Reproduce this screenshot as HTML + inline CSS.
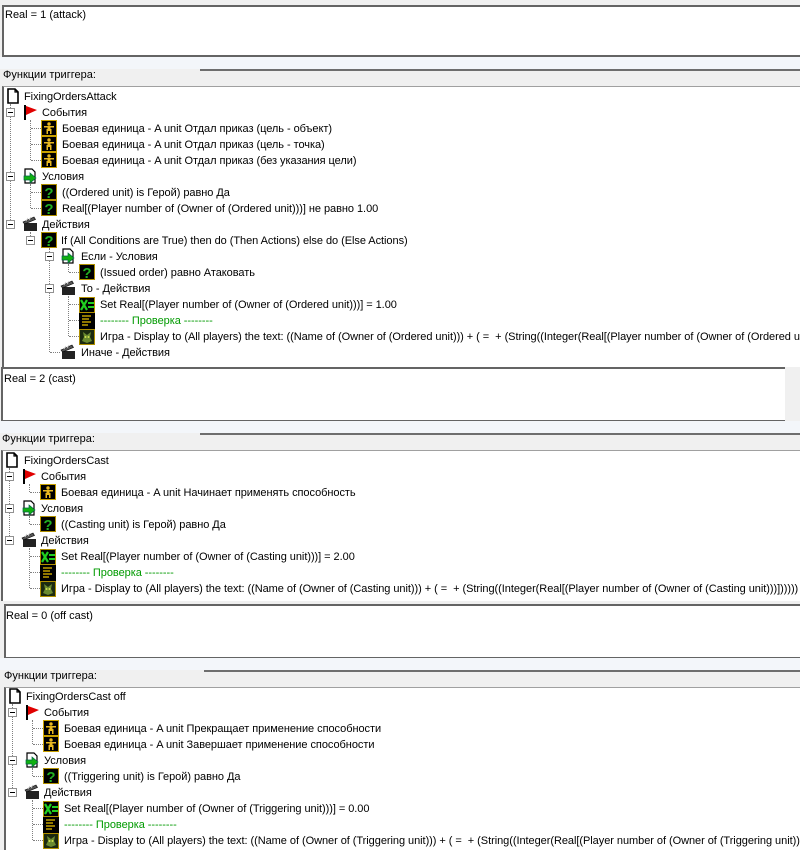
<!DOCTYPE html>
<html style="overflow:hidden"><head><meta charset="utf-8">
<style>
html,body{overflow:hidden}
body{margin:0;width:800px;height:850px;background:#f0f0f0;position:relative;overflow:hidden;font-family:"Liberation Sans",Arial,sans-serif;font-size:11px;color:#000}
.a{position:absolute;white-space:nowrap}
.t{position:absolute;white-space:nowrap;line-height:16px;height:16px;overflow:hidden;right:0;padding-top:1px;letter-spacing:-0.05px}
.tb{position:absolute;background:#fff;border-top:2px solid #646464;border-left:2px solid #646464;border-bottom:2px solid #646464}
.strip{position:absolute;background:#f3f6fa;height:12px}
.lbl{position:absolute;white-space:nowrap}
.hl{position:absolute;height:0;border-top:2px solid #6e6e6e}
.tree{position:absolute;background:#fff;border-top:1px solid #a0a0a0;border-left:2px solid #646464}
.ex{position:absolute;width:7px;height:7px;border:1px solid #919191;background:#fff}
.ex:after{content:"";position:absolute;left:1px;top:3px;width:5px;height:1px;background:#000}
.vd{position:absolute;width:0;border-left:1px dotted #808080}
.hd{position:absolute;height:0;border-top:1px dotted #808080}
svg.i{position:absolute;width:16px;height:16px}
.g{color:#009a00}
</style></head><body>
<svg width="0" height="0" style="position:absolute">
<defs>
<symbol id="doc" viewBox="0 0 16 16"><path d="M3 1h7l3 3v11H3z" fill="#fff" stroke="#000" stroke-width="1.6"/><path d="M10 1v3h3" fill="none" stroke="#000" stroke-width="1.2"/></symbol>
<symbol id="flag" viewBox="0 0 16 16"><rect x="2" y="1" width="2" height="15" fill="#000"/><path d="M4 2l11 4-11 5z" fill="#e00000"/></symbol>
<symbol id="unit" viewBox="0 0 16 16"><rect x="0" y="0" width="16" height="16" fill="#c8a000"/><rect x="1" y="1" width="14" height="14" fill="#000"/><circle cx="8" cy="4" r="1.7" fill="#e8b820"/><path d="M3 6h10v1.5H9.5V9h1v5H9v-3H7v3H5.5V9h1V7.5H3z" fill="#e8b820"/></symbol>
<symbol id="cond" viewBox="0 0 16 16"><path d="M3 1h7l3 3v11H3z" fill="#fff" stroke="#000" stroke-width="1.2"/><path d="M2 8h6V5l6 5-6 5v-3H2z" fill="#10b010" stroke="#064" stroke-width=".7"/></symbol>
<symbol id="q" viewBox="0 0 16 16"><rect width="16" height="16" fill="#b09000"/><rect x="1" y="1" width="14" height="14" fill="#000"/><text x="8" y="14" font-family="Liberation Sans" font-weight="bold" font-size="15" text-anchor="middle" fill="#22b022">?</text></symbol>
<symbol id="act" viewBox="0 0 16 16"><rect x="2" y="7" width="13" height="8" fill="#222"/><path d="M1 6l11-5 1.5 2.5L2.5 8z" fill="#555" stroke="#000" stroke-width=".6"/><path d="M4 5l2-3M7 4l2-3" stroke="#ccc" stroke-width=".8"/></symbol>
<symbol id="set" viewBox="0 0 16 16"><rect width="16" height="16" fill="#b09000"/><rect x="1" y="1" width="14" height="14" fill="#000"/><path d="M2 3l6 10M8 3L2 13" stroke="#20d020" stroke-width="2.2"/><path d="M9 6h6M9 10h6" stroke="#20d020" stroke-width="2"/></symbol>
<symbol id="cm" viewBox="0 0 16 16"><rect width="16" height="16" fill="#000"/><path d="M3 3h9M3 6h7M3 9h9M3 12h6" stroke="#e8c000" stroke-width="1.2"/></symbol>
<symbol id="game" viewBox="0 0 16 16"><rect width="16" height="16" fill="#b09000"/><rect x="1" y="1" width="14" height="14" fill="#1c2a10"/><path d="M4 3l4 3 4-3-1 5 2 4-5 2-5-2 2-4z" fill="#6a8a30"/><circle cx="6.5" cy="8" r="1" fill="#d0e050"/><circle cx="9.5" cy="8" r="1" fill="#d0e050"/></symbol>
</defs></svg>

<!-- ============ PANEL 1 ============ -->
<div class="tb" style="left:2px;top:5px;right:0;height:48px"></div>
<div class="a" style="left:5px;top:9px">Real = 1 (attack)</div>
<div class="strip" style="left:0;top:57px;right:0"></div>
<div class="hl" style="left:200px;top:69px;right:0"></div>
<div class="lbl" style="left:3px;top:69px">Функции триггера:</div>
<div class="tree" style="left:2px;top:86px;right:0;height:280px"></div>

<div class="vd" style="left:10px;top:104px;height:120px"></div>
<div class="vd" style="left:30px;top:120px;height:40px"></div><div class="hd" style="left:31px;top:128px;width:10px"></div><div class="hd" style="left:31px;top:144px;width:10px"></div><div class="hd" style="left:31px;top:160px;width:10px"></div>
<div class="vd" style="left:30px;top:184px;height:24px"></div><div class="hd" style="left:31px;top:192px;width:10px"></div><div class="hd" style="left:31px;top:208px;width:10px"></div>
<div class="vd" style="left:30px;top:232px;height:8px"></div>
<div class="vd" style="left:49px;top:248px;height:104px"></div><div class="hd" style="left:50px;top:352px;width:10px"></div>
<div class="vd" style="left:68px;top:264px;height:8px"></div><div class="hd" style="left:69px;top:272px;width:10px"></div>
<div class="vd" style="left:68px;top:296px;height:40px"></div><div class="hd" style="left:69px;top:304px;width:10px"></div><div class="hd" style="left:69px;top:320px;width:10px"></div><div class="hd" style="left:69px;top:336px;width:10px"></div>

<svg class="i" style="left:5px;top:88px"><use href="#doc"/></svg><div class="t" style="left:24px;top:88px">FixingOrdersAttack</div>
<div class="ex" style="left:6px;top:108px"></div><svg class="i" style="left:22px;top:104px"><use href="#flag"/></svg><div class="t" style="left:42px;top:104px">События</div>
<svg class="i" style="left:41px;top:120px"><use href="#unit"/></svg><div class="t" style="left:62px;top:120px">Боевая единица - A unit Отдал приказ (цель - объект)</div>
<svg class="i" style="left:41px;top:136px"><use href="#unit"/></svg><div class="t" style="left:62px;top:136px">Боевая единица - A unit Отдал приказ (цель - точка)</div>
<svg class="i" style="left:41px;top:152px"><use href="#unit"/></svg><div class="t" style="left:62px;top:152px">Боевая единица - A unit Отдал приказ (без указания цели)</div>
<div class="ex" style="left:6px;top:172px"></div><svg class="i" style="left:22px;top:168px"><use href="#cond"/></svg><div class="t" style="left:42px;top:168px">Условия</div>
<svg class="i" style="left:41px;top:184px"><use href="#q"/></svg><div class="t" style="left:62px;top:184px">((Ordered unit) is Герой) равно Да</div>
<svg class="i" style="left:41px;top:200px"><use href="#q"/></svg><div class="t" style="left:62px;top:200px">Real[(Player number of (Owner of (Ordered unit)))] не равно 1.00</div>
<div class="ex" style="left:6px;top:220px"></div><svg class="i" style="left:22px;top:216px"><use href="#act"/></svg><div class="t" style="left:42px;top:216px">Действия</div>
<div class="ex" style="left:26px;top:236px"></div><svg class="i" style="left:41px;top:232px"><use href="#q"/></svg><div class="t" style="left:61px;top:232px">If (All Conditions are True) then do (Then Actions) else do (Else Actions)</div>
<div class="ex" style="left:45px;top:252px"></div><svg class="i" style="left:60px;top:248px"><use href="#cond"/></svg><div class="t" style="left:81px;top:248px">Если - Условия</div>
<svg class="i" style="left:79px;top:264px"><use href="#q"/></svg><div class="t" style="left:100px;top:264px">(Issued order) равно Атаковать</div>
<div class="ex" style="left:45px;top:284px"></div><svg class="i" style="left:60px;top:280px"><use href="#act"/></svg><div class="t" style="left:81px;top:280px">То - Действия</div>
<svg class="i" style="left:79px;top:297px"><use href="#set"/></svg><div class="t" style="left:100px;top:296px">Set Real[(Player number of (Owner of (Ordered unit)))] = 1.00</div>
<svg class="i" style="left:79px;top:313px"><use href="#cm"/></svg><div class="t g" style="left:100px;top:312px">-------- Проверка --------</div>
<svg class="i" style="left:79px;top:329px"><use href="#game"/></svg><div class="t" style="left:100px;top:328px">Игра - Display to (All players) the text: ((Name of (Owner of (Ordered unit))) + ( =&nbsp; + (String((Integer(Real[(Player number of (Owner of (Ordered unit)))])))))</div>
<svg class="i" style="left:60px;top:344px"><use href="#act"/></svg><div class="t" style="left:81px;top:344px">Иначе - Действия</div>

<!-- ============ PANEL 2 ============ -->
<div class="tb" style="left:1px;top:367px;width:782px;height:51px"></div>
<div class="a" style="left:4px;top:373px">Real = 2 (cast)</div>
<div class="strip" style="left:0;top:421px;right:0"></div>
<div class="hl" style="left:200px;top:433px;right:0"></div>
<div class="lbl" style="left:2px;top:433px">Функции триггера:</div>
<div class="tree" style="left:1px;top:450px;right:0;height:150px"></div>

<div class="vd" style="left:9px;top:468px;height:72px"></div>
<div class="vd" style="left:29px;top:484px;height:8px"></div><div class="hd" style="left:30px;top:492px;width:10px"></div>
<div class="vd" style="left:29px;top:516px;height:8px"></div><div class="hd" style="left:30px;top:524px;width:10px"></div>
<div class="vd" style="left:29px;top:548px;height:40px"></div><div class="hd" style="left:30px;top:556px;width:10px"></div><div class="hd" style="left:30px;top:572px;width:10px"></div><div class="hd" style="left:30px;top:588px;width:10px"></div>

<svg class="i" style="left:4px;top:452px"><use href="#doc"/></svg><div class="t" style="left:24px;top:452px">FixingOrdersCast</div>
<div class="ex" style="left:5px;top:472px"></div><svg class="i" style="left:21px;top:468px"><use href="#flag"/></svg><div class="t" style="left:41px;top:468px">События</div>
<svg class="i" style="left:40px;top:484px"><use href="#unit"/></svg><div class="t" style="left:61px;top:484px">Боевая единица - A unit Начинает применять способность</div>
<div class="ex" style="left:5px;top:504px"></div><svg class="i" style="left:21px;top:500px"><use href="#cond"/></svg><div class="t" style="left:41px;top:500px">Условия</div>
<svg class="i" style="left:40px;top:516px"><use href="#q"/></svg><div class="t" style="left:61px;top:516px">((Casting unit) is Герой) равно Да</div>
<div class="ex" style="left:5px;top:536px"></div><svg class="i" style="left:21px;top:532px"><use href="#act"/></svg><div class="t" style="left:41px;top:532px">Действия</div>
<svg class="i" style="left:40px;top:549px"><use href="#set"/></svg><div class="t" style="left:61px;top:548px">Set Real[(Player number of (Owner of (Casting unit)))] = 2.00</div>
<svg class="i" style="left:40px;top:565px"><use href="#cm"/></svg><div class="t g" style="left:61px;top:564px">-------- Проверка --------</div>
<svg class="i" style="left:40px;top:581px"><use href="#game"/></svg><div class="t" style="left:61px;top:580px">Игра - Display to (All players) the text: ((Name of (Owner of (Casting unit))) + ( =&nbsp; + (String((Integer(Real[(Player number of (Owner of (Casting unit)))])))))</div>

<!-- ============ PANEL 3 ============ -->
<div class="tb" style="left:4px;top:604px;right:0;height:51px"></div>
<div class="a" style="left:6px;top:610px">Real = 0 (off cast)</div>
<div class="strip" style="left:0;top:658px;right:0"></div>
<div class="hl" style="left:204px;top:670px;right:0"></div>
<div class="lbl" style="left:4px;top:670px">Функции триггера:</div>
<div class="tree" style="left:4px;top:687px;right:0;height:170px"></div>

<div class="vd" style="left:12px;top:704px;height:88px"></div>
<div class="vd" style="left:32px;top:720px;height:24px"></div><div class="hd" style="left:33px;top:728px;width:10px"></div><div class="hd" style="left:33px;top:744px;width:10px"></div>
<div class="vd" style="left:32px;top:768px;height:8px"></div><div class="hd" style="left:33px;top:776px;width:10px"></div>
<div class="vd" style="left:32px;top:800px;height:40px"></div><div class="hd" style="left:33px;top:808px;width:10px"></div><div class="hd" style="left:33px;top:824px;width:10px"></div><div class="hd" style="left:33px;top:840px;width:10px"></div>

<svg class="i" style="left:7px;top:688px"><use href="#doc"/></svg><div class="t" style="left:26px;top:688px">FixingOrdersCast off</div>
<div class="ex" style="left:8px;top:708px"></div><svg class="i" style="left:24px;top:704px"><use href="#flag"/></svg><div class="t" style="left:44px;top:704px">События</div>
<svg class="i" style="left:43px;top:720px"><use href="#unit"/></svg><div class="t" style="left:64px;top:720px">Боевая единица - A unit Прекращает применение способности</div>
<svg class="i" style="left:43px;top:736px"><use href="#unit"/></svg><div class="t" style="left:64px;top:736px">Боевая единица - A unit Завершает применение способности</div>
<div class="ex" style="left:8px;top:756px"></div><svg class="i" style="left:24px;top:752px"><use href="#cond"/></svg><div class="t" style="left:44px;top:752px">Условия</div>
<svg class="i" style="left:43px;top:768px"><use href="#q"/></svg><div class="t" style="left:64px;top:768px">((Triggering unit) is Герой) равно Да</div>
<div class="ex" style="left:8px;top:788px"></div><svg class="i" style="left:24px;top:784px"><use href="#act"/></svg><div class="t" style="left:44px;top:784px">Действия</div>
<svg class="i" style="left:43px;top:801px"><use href="#set"/></svg><div class="t" style="left:64px;top:800px">Set Real[(Player number of (Owner of (Triggering unit)))] = 0.00</div>
<svg class="i" style="left:43px;top:817px"><use href="#cm"/></svg><div class="t g" style="left:64px;top:816px">-------- Проверка --------</div>
<svg class="i" style="left:43px;top:833px"><use href="#game"/></svg><div class="t" style="left:64px;top:832px">Игра - Display to (All players) the text: ((Name of (Owner of (Triggering unit))) + ( =&nbsp; + (String((Integer(Real[(Player number of (Owner of (Triggering unit)))])))))</div>
</body></html>
